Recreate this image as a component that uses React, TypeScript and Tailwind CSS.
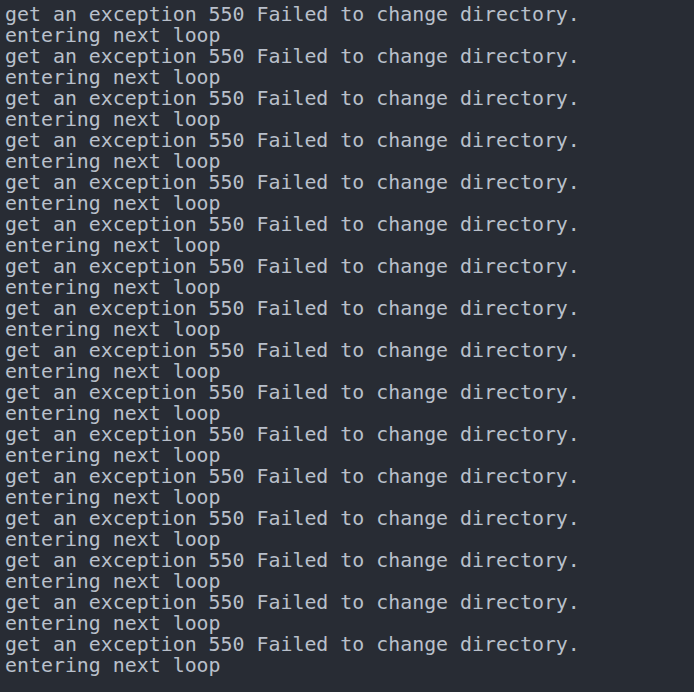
export default function App() {
  const lines: string[] = [];
  for (let i = 0; i < 16; i++) {
    lines.push("get an exception 550 Failed to change directory.");
    lines.push("entering next loop");
  }
  return (
    <div className="w-[694px] h-[692px] bg-[#282c34] overflow-hidden pt-[4px] pl-[5px]">
      <pre
        className="text-[19.9px] leading-[21px] text-[#b9c0cb] m-0"
        style={{ fontFamily: '"DejaVu Sans Mono", monospace' }}
      >
        {lines.join("\n")}
      </pre>
    </div>
  );
}
